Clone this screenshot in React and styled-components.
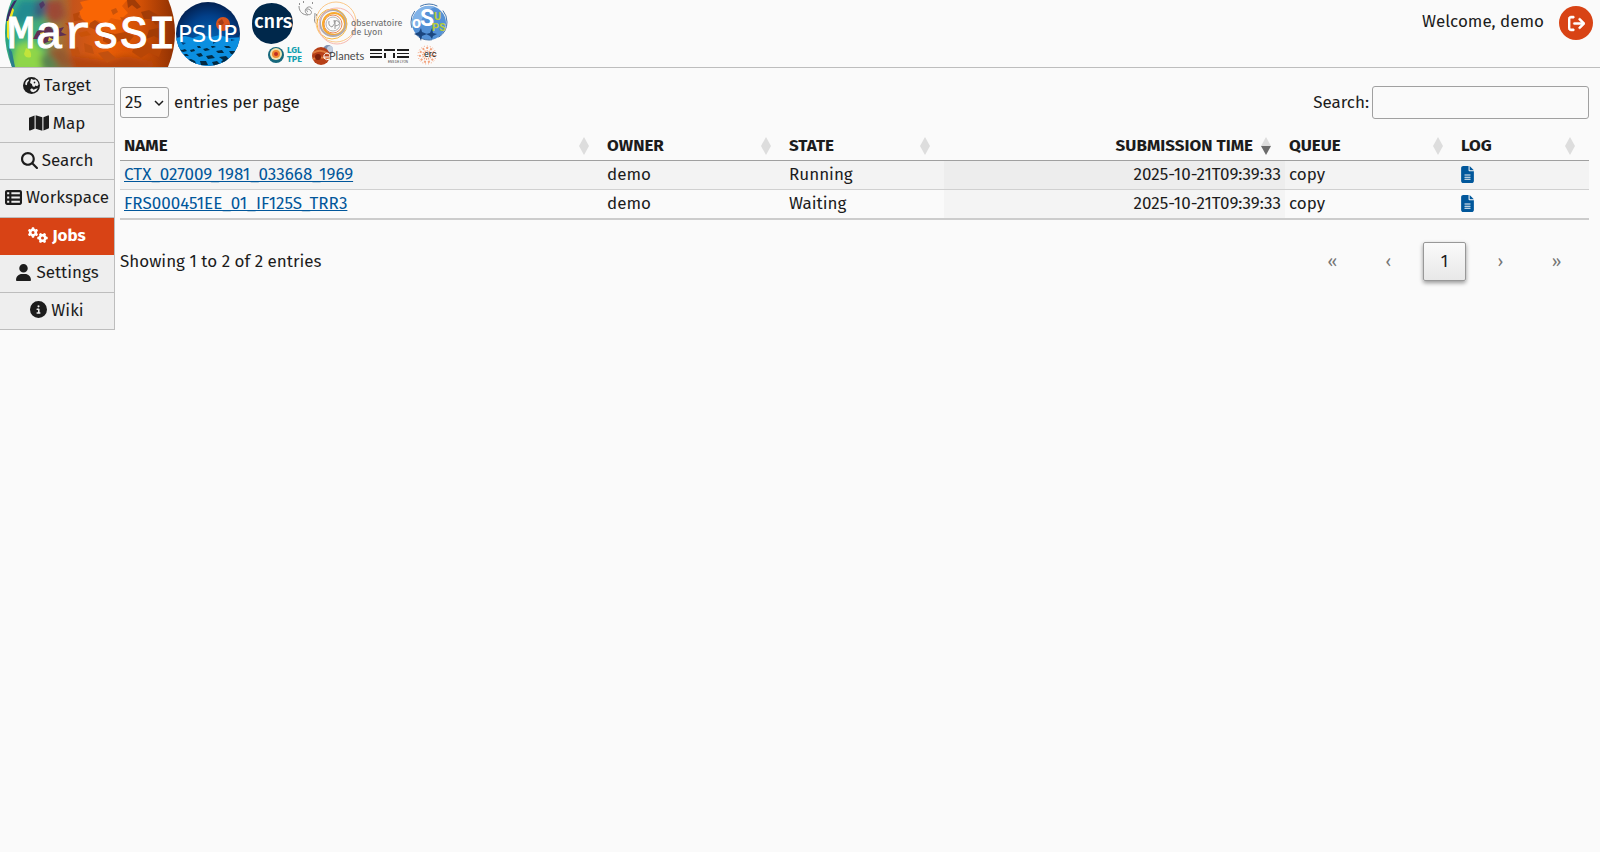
import React, { useState } from "react";
import styled, { createGlobalStyle } from "styled-components";
import {
  FaMap,
  FaMagnifyingGlass,
  FaTableList,
  FaGears,
  FaUser,
  FaCircleInfo,
  FaFileLines,
  FaArrowRightFromBracket,
} from "react-icons/fa6";

const colors = {
  main: "#d84315",
  text: "#1c1c1c",
  link: "#01579b",
  line: "#bdbdbd",
  dark_line: "#a0a0a0",
  menu: "#eeeeee",
  page: "#fafafa",
};

const GlobalStyle = createGlobalStyle`
  * {
    box-sizing: border-box;
  }
  body {
    margin: 0;
    background-color: ${colors.page};
    color: ${colors.text};
    font-family: "Fira Sans", "Noto Sans", sans-serif;
    font-size: 17px;
    line-height: 24px;
  }
  button, input, select {
    font: inherit;
    color: inherit;
  }
`;

const Header = styled.header`
  display: flex;
  justify-content: space-between;
  border-bottom: 1px solid ${colors.line};
`;
const Logos = styled.div`
  display: flex;
  padding-left: 5px;

  a,
  svg {
    display: block;
  }
`;
const UserBox = styled.div`
  display: flex;
  align-items: flex-start;
  gap: 15px;
  padding: 6px 7px 0 0;
`;
const Welcome = styled.span`
  padding-top: 4px;
`;
const LogoutButton = styled.button`
  display: flex;
  align-items: center;
  justify-content: center;
  width: 34px;
  height: 34px;
  padding: 0;
  border: none;
  border-radius: 50%;
  background-color: ${colors.main};
  color: white;
  font-size: 17px;
  cursor: pointer;

  path {
    stroke: white;
    stroke-width: 16px;
  }
`;

const Container = styled.div`
  display: flex;
  align-items: flex-start;
`;
const Menu = styled.nav`
  flex: 0 0 115px;
  display: grid;
  grid-auto-rows: 1fr;
  min-height: 262px;
  border-right: 1px solid ${colors.line};
`;
const MenuItem = styled.a`
  display: flex;
  align-items: center;
  justify-content: center;
  gap: 4px;
  border-bottom: 1px solid ${(props) => (props.$focused ? colors.main : colors.line)};
  background-color: ${(props) => (props.$focused ? colors.main : colors.menu)};
  color: ${(props) => (props.$focused ? "white" : colors.text)};
  font-weight: ${(props) => (props.$focused ? 700 : 400)};
  text-decoration: none;

  svg {
    flex: none;
    margin-bottom: 2px;
    font-size: ${(props) => (props.$wide ? "20px" : "17px")};
  }
`;

const Main = styled.main`
  flex: 1;
  min-width: 0;
  padding: 18px 11px 0 5px;
`;
const Toolbar = styled.div`
  display: flex;
  align-items: center;
  justify-content: space-between;
`;
const PageLength = styled.div`
  display: flex;
  align-items: center;
  gap: 5px;
`;
const SelectBox = styled.span`
  position: relative;

  svg {
    position: absolute;
    right: 5px;
    top: 11px;
    pointer-events: none;
  }
`;
const LengthSelect = styled.select`
  display: block;
  appearance: none;
  width: 49px;
  height: 31px;
  padding: 0 4px;
  border: 1px solid ${colors.dark_line};
  border-radius: 3px;
  background-color: transparent;
`;
const SearchBox = styled.div`
  display: flex;
  align-items: center;
  gap: 3px;
`;
const SearchInput = styled.input`
  width: 217px;
  height: 33px;
  padding: 4px;
  border: 1px solid ${colors.dark_line};
  border-radius: 3px;
  background-color: transparent;
`;

const Table = styled.table`
  width: 100%;
  margin-top: 12px;
  table-layout: fixed;
  border-collapse: separate;
  border-spacing: 0;
  border-bottom: 2px solid #cccccc;
`;
const HeadCell = styled.th`
  padding: 3px 0 2px 4px;
  border-bottom: 1px solid ${colors.dark_line};
  text-align: left;
`;
const SortButton = styled.button`
  display: flex;
  align-items: center;
  justify-content: ${(props) => (props.$right ? "flex-end" : "space-between")};
  gap: 8px;
  width: 100%;
  padding: 0 14px 0 0;
  border: none;
  background: none;
  font-weight: 700;
  white-space: nowrap;
  cursor: pointer;
`;
const Row = styled.tr`
  background-color: ${(props) => (props.$odd ? "#f3f3f3" : "transparent")};

  &:not(:first-child) td {
    border-top: 1px solid #d0d0d0;
  }
`;
const Cell = styled.td`
  padding: 2px 4px;
  text-align: ${(props) => (props.$sorted ? "right" : "left")};
  background-color: ${(props) => (props.$sorted ? "rgba(0, 0, 0, 0.024)" : "transparent")};

  a {
    color: ${colors.link};
  }
  svg {
    display: block;
    font-size: 17px;
    margin: 0 0 2px -2px;
  }
`;

const Footer = styled.div`
  display: flex;
  align-items: center;
  justify-content: space-between;
  margin-top: 22px;
`;
const Paging = styled.nav`
  display: flex;
  gap: 13px;
  padding-right: 11px;
`;
const PageButton = styled.button`
  width: 43px;
  height: 39px;
  padding: 0;
  border: 1px solid ${(props) => (props.$current ? "#989898" : "transparent")};
  border-radius: 2px;
  background: ${(props) =>
    props.$current ? "linear-gradient(#fafafa, #e8e8e8)" : "transparent"};
  box-shadow: ${(props) =>
    props.$current ? "0 2px 4px rgba(0, 0, 0, 0.4)" : "none"};
  color: ${(props) => (props.$current ? colors.text : "#757575")};
`;

const MarsLogo = () => (
  <svg width="171" height="67" viewBox="5 0 171 67" role="img" aria-label="MarsSI">
    <defs>
      <linearGradient id="mars" x1="5" x2="175" y1="0" y2="0" gradientUnits="userSpaceOnUse">
        <stop offset="0" stopColor="#2ba37f" />
        <stop offset="0.08" stopColor="#39b08a" />
        <stop offset="0.2" stopColor="#45ad78" />
        <stop offset="0.29" stopColor="#8f8246" />
        <stop offset="0.4" stopColor="#c4541c" />
        <stop offset="0.62" stopColor="#e85c05" />
        <stop offset="0.8" stopColor="#d15006" />
        <stop offset="1" stopColor="#8e3003" />
      </linearGradient>
      <filter id="soft" x="-30%" y="-30%" width="160%" height="160%">
        <feGaussianBlur stdDeviation="3" />
      </filter>
      <clipPath id="marsDisc">
        <circle cx="90" cy="33" r="85" />
      </clipPath>
    </defs>
    <g clipPath="url(#marsDisc)">
      <rect x="0" y="0" width="180" height="67" fill="url(#mars)" />
      <g filter="url(#soft)">
        <path d="M20 0l20 0-4 14-16 12-10-4z" fill="#248a90" />
        <path d="M36 0h12l-4 16-10 4z" fill="#3c5c7c" />
        <path d="M46 0h16l4 16-12 8-8-8z" fill="#9c4a34" />
        <path d="M16 44l16-4 12 12 2 20H10z" fill="#8fd64a" />
        <path d="M40 56l14-4 14 6 4 12H42z" fill="#5a8450" />
        <path d="M48 50l16-2 10 20H60z" fill="#94592e" />
        <path d="M70 56l36 4 20-4 30 6-6 10H74z" fill="#b44408" />
      </g>
      <path d="M12 7l2 3-4 14-1 16-2-3v-17z" fill="#f2e51f" />
      <path d="M8 46l4 6 3 15h-4z" fill="#2b7e8c" />
      <path d="M14 1l3-1-5 9-4 12-2 0q2-12 8-20z" fill="#3a2c68" />
      <path d="M26 48q6 2 5 9-5 2-7-3z" fill="#d7e936" opacity="0.700" />
      <path d="M37 31l7-2 4-4 5 5 11-3-3 5 6 3-12 2 2 7-7-3-7 3-4-5-6 0z" fill="#5e2f52" />
      <path d="M40 33l4-1 1 3-4 2zM49 37l5 3-6 1z" fill="#e3cb3b" />
      <path d="M39 4l4-3 2 4-4 4z" fill="#4c2f60" opacity="0.800" />
      <path d="M80 2l9-2h24l14 0-5 6 6 7-8 7-9-2-5 6-9-4-7 5-8-6-3-7 4-4z" fill="#f96504" />
      <path d="M73 14l7-2-2 5 5 3-9 1zM65 23l8 1-3 4zM90 23l5-3 7 5-4 6-9-4z" fill="#b8480a" />
      <path d="M127 0l8 0 6 7-4 2-5-4-4 3zM141 12l8-2 9 5 9 0 4 6-8-1-7 5-5-6-7 0zM149 30l9-2 9 5-7 6-6-3-8 3z" fill="#a23c06" />
      <path d="M103 31l12 3 10-2 9 4-6 7-9-2-7 5-9-5zM136 43l9-3 8 7 10-1-4 11-10-4-8 5-9-6z" fill="#b84606" />
      <path d="M84 43l8 3 2 8-9-2zM98 53l10-2 8 7-9 5zM71 49l7-2 2 7-8 2z" fill="#c2500f" />
      <path d="M111 10l5-2 2 4-5 3zM120 17l6 1-2 5zM78 33l9-2 4 4-10 2z" fill="#ca5208" />
    </g>
    <text
      x="7"
      y="48"
      fill="white"
      stroke="white"
      strokeWidth="1"
      fontFamily="'Liberation Mono', monospace"
      fontSize="47"
    >
      MarsSI
    </text>
  </svg>
);

const PsupLogo = () => (
  <svg width="65" height="67" viewBox="176 0 65 67" role="img" aria-label="PSUP">
    <defs>
      <radialGradient id="sky" cx="0.5" cy="0.6" r="0.6">
        <stop offset="0" stopColor="#0669b4" />
        <stop offset="0.6" stopColor="#02408a" />
        <stop offset="1" stopColor="#021c49" />
      </radialGradient>
      <clipPath id="psupDisc">
        <circle cx="208" cy="34" r="32" />
      </clipPath>
    </defs>
    <g clipPath="url(#psupDisc)">
      <rect x="176" y="0" width="66" height="67" fill="url(#sky)" />
      <circle cx="223" cy="24" r="7" fill="#d8541d" />
      <path d="M218 22l4-3 2 4-3 3zM225 25l4-1-2 5z" fill="#a53c16" />
      <path d="M176 38l9-2 8 2 8-3 10 2 9-2 9 3 13-1v31h-66z" fill="#0b8fe0" />
      <path
        d="M178 49l4 1 3-1 2 2-4 1zM184 54l3 0 2 2-4 0zM190 50l4-1 1 2-4 1zM197 46l3 0 1 2-3 0zM186 60l5-1 4 2 2 5-8-2zM196 54l5-1 2 3-4 1zM203 49l4-1 3 2-5 1zM206 56l6-1 3 3-7 1zM211 46l3 0 2 1-4 1zM216 51l6-1 2 3-6 0zM224 46l5 0 2 2-5 0zM200 61l6 0 2 4-7 0zM219 57l7-1 3 3 5-1-2 3-7 4-4-3 2-2zM229 51l7 0-1 4-4-1zM212 62l5-1 3 3-6 2zM194 66l-4-5 3-1z"
        fill="#032a42"
      />
      <path d="M181 42l5 1-3 2zM198 40l3 1-4 1zM213 41l3 1-3 2zM231 39l4 1-4 1z" fill="#04447e" />
    </g>
    <text x="178" y="42" fill="white" fontFamily="'DejaVu Sans', sans-serif" fontSize="23">
      PSUP
    </text>
  </svg>
);

const PartnerLogos = () => (
  <svg width="215" height="67" viewBox="241 0 215 67" role="img" aria-label="Partners">
    {/* cnrs */}
    <path
      d="M262 5q10-4 19 0q12 6 12 18q-1 13-11 18q-11 6-21 0q-9-6-9-17q0-14 10-19z"
      fill="#00284b"
    />
    <text
      x="254"
      y="28"
      fill="white"
      fontFamily="'Fira Sans', Roboto, sans-serif"
      fontSize="20"
      fontWeight="500"
    >
      cnrs
    </text>

    {/* observatoire de Lyon */}
    <g fill="none" stroke="#909090" strokeWidth="1">
      <path d="M312 9c-2-5-9 0-6 4s8 0 4-3-4 1-2 2M299 6c0 6 4 9 9 9M315 13c0 6-2 9 2 11" />
      <path d="M299 4h1M303 2h1M312 3h1M316 15h1M317 20h1" strokeWidth="2" />
    </g>
    <g fill="none">
      <circle cx="333" cy="24" r="7" stroke="#b4b4b4" />
      <path d="M329 21q-1 5 3 6 4-3 2-7M334 22q3-3 5 0t-4 4M335 20v9" stroke="#999" />
      <circle cx="333" cy="24" r="9" stroke="#e98a5a" />
      <circle cx="334" cy="24" r="11" stroke="#f8a92c" strokeWidth="2" />
      <circle cx="333" cy="23" r="13" stroke="#b0aab0" strokeWidth="2" />
      <circle cx="332" cy="24" r="15" stroke="#fbb840" />
      <circle cx="336" cy="22" r="20" stroke="#fbc98a" />
      <circle cx="337" cy="26" r="18" stroke="#f7b8ae" />
    </g>
    <text fill="#6b6b6b" fontFamily="'Fira Sans', 'Open Sans', sans-serif" fontSize="9">
      <tspan x="351" y="26">observatoire</tspan>
      <tspan x="351" y="35">de Lyon</tspan>
    </text>

    {/* OSUPS */}
    <circle cx="429" cy="23" r="17" fill="#5391d6" />
    <path d="M415 13a17 17 0 0 1 20-6q-10 3-13 12t-8 8q-4-6 1-14z" fill="#80b2e8" />
    <circle cx="429" cy="22" r="18" fill="none" stroke="#4575ab" strokeDasharray="18 7" />
    <path d="M421 28l1 4 5 2-5 2-1 5-2-5-5-2 5-2zM432 28l1 5 4 1-4 2-1 3-2-3-4-2 4-1z" fill="#1b467f" />
    <text fill="white" fontFamily="Roboto, sans-serif" fontWeight="700">
      <tspan x="412" y="28" fontSize="16">o</tspan>
      <tspan x="420" y="26" fontSize="23">S</tspan>
      <tspan x="434" y="20" fontSize="11" fill="#b8cc3a">U</tspan>
      <tspan x="432" y="31" fontSize="11" fill="#b8cc3a">PS</tspan>
    </text>

    {/* LGL TPE */}
    <circle cx="276" cy="55" r="8" fill="#17687c" />
    <circle cx="276" cy="54" r="6" fill="#f3e4b0" />
    <circle cx="276" cy="54" r="4" fill="#f08b32" />
    <circle cx="276" cy="54" r="2" fill="#c22f24" />
    <text fill="#12a0b0" fontFamily="'Fira Sans', 'Open Sans', sans-serif" fontSize="9" fontWeight="700">
      <tspan x="287" y="53">LGL</tspan>
      <tspan x="287" y="62">TPE</tspan>
    </text>

    {/* ePlanets */}
    <circle cx="328" cy="50" r="5" fill="#7e90b0" />
    <circle cx="330" cy="49" r="3" fill="#c4cfe0" />
    <circle cx="321" cy="56" r="9" fill="#b63f17" />
    <path d="M313 53q8-5 15 1M313 59q7-3 16 0" stroke="#dd7a3c" strokeWidth="2" fill="none" />
    <circle cx="318" cy="57" r="3" fill="#7c210c" />
    <path d="M324 57h6q0-4-3-4-4 1-3 5 2 3 6 1" stroke="white" fill="none" />
    <text x="329" y="60" fill="#4b4b4b" fontFamily="Lato, sans-serif" fontSize="11">
      Planets
    </text>

    {/* ENS de Lyon */}
    <path
      d="M370 49h12v2h-12zM370 53h12v1h-12zM370 56h12v2h-12zM384 49h11v2h-11zM384 53h2v5h-2zM393 53h2v5h-2zM397 49h12v2h-12zM397 53h12v1h-12zM397 56h12v2h-12z"
      fill="#1d1d1d"
    />
    <text x="388" y="63" fill="#333" fontFamily="'Liberation Sans', sans-serif" fontSize="3">
      ENS DE LYON
    </text>

    {/* erc */}
    <g fill="none" stroke="#f3a27c">
      <circle cx="427" cy="55" r="9" strokeDasharray="1 2" />
      <circle cx="427" cy="55" r="7" strokeWidth="2" strokeDasharray="2 2" />
      <circle cx="427" cy="55" r="4" strokeWidth="2" strokeDasharray="1 1" />
    </g>
    <text x="424" y="57" fill="#222" fontFamily="Roboto, sans-serif" fontSize="9">
      erc
    </text>
  </svg>
);

const MarsGlobe = () => (
  <svg width="17" height="17" viewBox="0 0 48 48" aria-hidden="true">
    <circle cx="24" cy="24" r="24" fill={colors.text} />
    <path
      d="M23 5l6 3 7-1q7 6 8 14l-4 5-5-2-3 4-5-2-2-6-5-3 1-6z"
      fill={colors.menu}
    />
    <path d="M10 10l6-4 1 4-5 6-1 7-5-2q0-6 4-11z" fill={colors.menu} />
    <path d="M20 36l5-4 5 4 6-3 6-1q-4 9-13 11l-6-2z" fill={colors.menu} />
    <path d="M30 14l4-1 1 4-4 1z" fill={colors.text} />
  </svg>
);

const SortIcon = ({ order }) => (
  <svg width="10" height="18" viewBox="0 0 10 18" aria-hidden="true">
    <path d="M5 0l5 9H0z" fill="#dddddd" />
    <path d="M0 9h10l-5 9z" fill={order === "desc" ? "#6b6b6b" : "#dddddd"} />
  </svg>
);

const menus = [
  { name: "Target", icon: <MarsGlobe /> },
  { name: "Map", icon: <FaMap />, wide: true },
  { name: "Search", icon: <FaMagnifyingGlass /> },
  { name: "Workspace", icon: <FaTableList /> },
  { name: "Jobs", icon: <FaGears />, wide: true },
  { name: "Settings", icon: <FaUser /> },
  { name: "Wiki", icon: <FaCircleInfo /> },
];

// widths are shares, the fixed table layout spreads them over the full width
const columns = [
  { name: "NAME", width: 483 },
  { name: "OWNER", width: 182 },
  { name: "STATE", width: 159 },
  { name: "SUBMISSION TIME", width: 341, order: "desc" },
  { name: "QUEUE", width: 172 },
  { name: "LOG", width: 132 },
];

const jobs = [
  {
    name: "CTX_027009_1981_033668_1969",
    owner: "demo",
    state: "Running",
    time: "2025-10-21T09:39:33",
    queue: "copy",
  },
  {
    name: "FRS000451EE_01_IF125S_TRR3",
    owner: "demo",
    state: "Waiting",
    time: "2025-10-21T09:39:33",
    queue: "copy",
  },
];

const pages = [
  { label: "«", title: "First" },
  { label: "‹", title: "Previous" },
  { label: "1", title: "1", current: true },
  { label: "›", title: "Next" },
  { label: "»", title: "Last" },
];

const App = () => {
  const [menu, setMenu] = useState("Jobs");
  const [length, setLength] = useState("25");
  const [search, setSearch] = useState("");

  return (
    <>
      <GlobalStyle />
      <Header>
        <Logos>
          <a href="#marssi">
            <MarsLogo />
          </a>
          <a href="#psup">
            <PsupLogo />
          </a>
          <PartnerLogos />
        </Logos>
        <UserBox>
          <Welcome>Welcome, demo</Welcome>
          <LogoutButton aria-label="Logout">
            <FaArrowRightFromBracket />
          </LogoutButton>
        </UserBox>
      </Header>

      <Container>
        <Menu>
          {menus.map((el) => (
            <MenuItem
              key={el.name}
              href={`#${el.name.toLowerCase()}`}
              $focused={menu === el.name}
              $wide={el.wide}
              onClick={() => setMenu(el.name)}
            >
              {el.icon}
              {el.name}
            </MenuItem>
          ))}
        </Menu>

        <Main>
          <Toolbar>
            <PageLength>
              <SelectBox>
                <LengthSelect
                  id="length"
                  value={length}
                  onChange={(e) => setLength(e.target.value)}
                >
                  <option>10</option>
                  <option>25</option>
                  <option>50</option>
                  <option>100</option>
                </LengthSelect>
                <svg width="10" height="10" viewBox="0 0 10 10" aria-hidden="true">
                  <path d="M1 3l4 4 4-4" fill="none" stroke={colors.text} strokeWidth="1.500" />
                </svg>
              </SelectBox>
              <label htmlFor="length">entries per page</label>
            </PageLength>
            <SearchBox>
              <label htmlFor="search">Search:</label>
              <SearchInput
                id="search"
                type="search"
                value={search}
                onChange={(e) => setSearch(e.target.value)}
              />
            </SearchBox>
          </Toolbar>

          <Table>
            <colgroup>
              {columns.map((col) => (
                <col key={col.name} width={col.width} />
              ))}
            </colgroup>
            <thead>
              <tr>
                {columns.map((col) => (
                  <HeadCell key={col.name}>
                    <SortButton $right={!!col.order}>
                      {col.name}
                      <SortIcon order={col.order} />
                    </SortButton>
                  </HeadCell>
                ))}
              </tr>
            </thead>
            <tbody>
              {jobs.map((job, index) => (
                <Row key={job.name} $odd={index % 2 === 0}>
                  <Cell>
                    <a href={`#${job.name}`}>{job.name}</a>
                  </Cell>
                  <Cell>{job.owner}</Cell>
                  <Cell>{job.state}</Cell>
                  <Cell $sorted>{job.time}</Cell>
                  <Cell>{job.queue}</Cell>
                  <Cell>
                    <a href={`#log-${job.name}`} aria-label="Log">
                      <FaFileLines />
                    </a>
                  </Cell>
                </Row>
              ))}
            </tbody>
          </Table>

          <Footer>
            <span>Showing 1 to 2 of 2 entries</span>
            <Paging aria-label="pagination">
              {pages.map((page) => (
                <PageButton
                  key={page.title}
                  aria-label={page.title}
                  $current={page.current}
                  disabled={!page.current}
                >
                  {page.label}
                </PageButton>
              ))}
            </Paging>
          </Footer>
        </Main>
      </Container>
    </>
  );
};

export default App;
